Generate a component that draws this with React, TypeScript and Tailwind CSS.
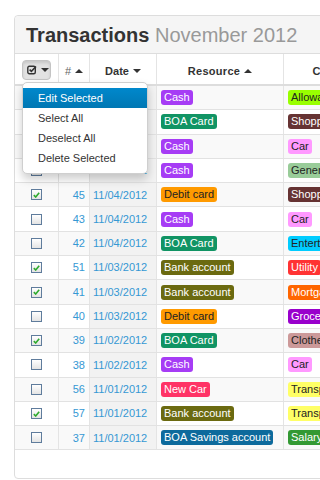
import React from "react";

type Tag = { text: string; bg: string; fg: string };

const RES: Record<string, Tag> = {
  cash: { text: "Cash", bg: "bg-[#a63cf5]", fg: "text-white" },
  boa: { text: "BOA Card", bg: "bg-[#119464]", fg: "text-white" },
  debit: { text: "Debit card", bg: "bg-[#ff9a00]", fg: "text-[#222]" },
  bank: { text: "Bank account", bg: "bg-[#6b6a10]", fg: "text-white" },
  newcar: { text: "New Car", bg: "bg-[#ff3366]", fg: "text-white" },
  savings: { text: "BOA Savings account", bg: "bg-[#0d6a9c]", fg: "text-white" },
};

const CAT: Record<string, Tag> = {
  allowance: { text: "Allowance", bg: "bg-[#99ff00]", fg: "text-[#222]" },
  shopping: { text: "Shopping", bg: "bg-[#663333]", fg: "text-white" },
  car: { text: "Car", bg: "bg-[#ff99ff]", fg: "text-[#222]" },
  general: { text: "General", bg: "bg-[#99cc99]", fg: "text-[#222]" },
  ent: { text: "Entertainment", bg: "bg-[#00ccff]", fg: "text-[#222]" },
  utility: { text: "Utility", bg: "bg-[#ff3333]", fg: "text-white" },
  mortgage: { text: "Mortgage", bg: "bg-[#ff6600]", fg: "text-white" },
  groceries: { text: "Groceries", bg: "bg-[#9900cc]", fg: "text-white" },
  clothes: { text: "Clothes", bg: "bg-[#cc9999]", fg: "text-[#222]" },
  transport: { text: "Transport", bg: "bg-[#ffff66]", fg: "text-[#222]" },
  salary: { text: "Salary", bg: "bg-[#339933]", fg: "text-white" },
};

const rows = [
  { id: 52, date: "11/05/2012", res: "cash", cat: "allowance", checked: false },
  { id: 49, date: "11/05/2012", res: "boa", cat: "shopping", checked: false },
  { id: 48, date: "11/05/2012", res: "cash", cat: "car", checked: false },
  { id: 44, date: "11/05/2012", res: "cash", cat: "general", checked: false },
  { id: 45, date: "11/04/2012", res: "debit", cat: "shopping", checked: true },
  { id: 43, date: "11/04/2012", res: "cash", cat: "car", checked: false },
  { id: 42, date: "11/04/2012", res: "boa", cat: "ent", checked: false },
  { id: 51, date: "11/03/2012", res: "bank", cat: "utility", checked: true },
  { id: 41, date: "11/03/2012", res: "bank", cat: "mortgage", checked: true },
  { id: 40, date: "11/03/2012", res: "debit", cat: "groceries", checked: false },
  { id: 39, date: "11/02/2012", res: "boa", cat: "clothes", checked: true },
  { id: 38, date: "11/02/2012", res: "cash", cat: "car", checked: false },
  { id: 56, date: "11/01/2012", res: "newcar", cat: "transport", checked: false },
  { id: 57, date: "11/01/2012", res: "bank", cat: "transport", checked: true },
  { id: 37, date: "11/01/2012", res: "savings", cat: "salary", checked: false },
];

const CaretUp = () => (
  <span className="inline-block w-0 h-0 ml-[4px] align-middle border-l-[4px] border-r-[4px] border-b-[4px] border-l-transparent border-r-transparent border-b-[#333]" />
);

const CaretDown = () => (
  <span className="inline-block w-0 h-0 ml-[4px] align-middle border-l-[4px] border-r-[4px] border-t-[4px] border-l-transparent border-r-transparent border-t-[#333]" />
);

const Label = ({ tag }: { tag: Tag }) => (
  <span className={`inline-block whitespace-nowrap rounded-[3px] px-[3px] leading-[15px] text-[11px] ${tag.bg} ${tag.fg}`}>
    {tag.text}
  </span>
);

const Checkbox = ({ checked }: { checked: boolean }) => (
  <span className="flex items-center justify-center w-[11px] h-[11px] border border-[#5f7c9c] bg-gradient-to-b from-white to-[#e4e4e4]">
    {checked && (
      <svg width="7" height="6" viewBox="0 0 7 6">
        <path d="M0.8 3.2 L2.7 5 L6.2 0.8" fill="none" stroke="#2eaa2e" strokeWidth="1.6" />
      </svg>
    )}
  </span>
);

const App = () => {
  return (
    <div className="relative w-[320px] h-[480px] overflow-hidden bg-white pl-[14px] pt-[15px] font-['Liberation_Sans',Arial,sans-serif]">
      <div className="w-[520px] h-[464px] border border-[#dddddd] rounded-[4px] bg-white">
        <div className="h-[38px] border-b border-[#dddddd] bg-[#f5f5f5] rounded-t-[4px] pl-[11px] pt-[7px] text-[20px] leading-[24px] whitespace-nowrap">
          <span className="font-bold text-[#333]">Transactions</span>{" "}
          <span className="text-[#999]">November 2012</span>
        </div>

        <div className="flex h-[32px] border-b-2 border-[#dddddd] text-[11px] font-bold text-[#333]">
          <div className="w-[44px] border-r border-[#e4e4e4] pl-[7px] pt-[6px]">
            <div className="flex items-center w-[29px] h-[20px] rounded-[4px] border border-[#c4c4c4] bg-[#e2e2e2] shadow-[inset_0_2px_3px_rgba(0,0,0,0.12)] pl-[4px]">
              <svg width="10" height="10" viewBox="0 0 10 10">
                <rect x="0.8" y="1.3" width="7.5" height="7.5" rx="1.5" fill="none" stroke="#333" strokeWidth="1.4" />
                <path d="M2.6 4.6 L4.4 6.3 L9 1.5" fill="none" stroke="#333" strokeWidth="1.6" />
              </svg>
              <CaretDown />
            </div>
          </div>
          <div className="w-[31px] border-r border-[#e4e4e4] flex items-center justify-center pt-[4px] font-normal text-[#666]">
            #<CaretUp />
          </div>
          <div className="w-[67px] border-r border-[#e4e4e4] flex items-center justify-center pt-[4px]">
            Date<CaretDown />
          </div>
          <div className="w-[127px] border-r border-[#e4e4e4] flex items-center justify-center pt-[4px] tracking-[0.3px]">
            Resource<CaretUp />
          </div>
          <div className="w-[120px] border-r border-[#e4e4e4] flex items-center justify-center pt-[4px] tracking-[0.3px]">
            Category<CaretUp />
          </div>
          <div className="flex-1 flex items-center justify-center pt-[4px]">Amount</div>
        </div>

        {rows.map((r, i) => (
          <div
            key={r.id}
            className={`flex h-[24.3px] border-b border-[#e2e2e2] text-[11px] ${i % 2 === 0 ? "bg-[#f9f9f9]" : "bg-white"}`}
          >
            <div className="w-[44px] border-r border-[#e4e4e4] flex items-center justify-center">
              <Checkbox checked={r.checked} />
            </div>
            <div className="w-[31px] border-r border-[#e4e4e4] flex items-center justify-end pr-[4px] text-[#3598d4]">
              {r.id}
            </div>
            <div className="w-[67px] border-r border-[#e4e4e4] flex items-center pl-[3px] text-[#3598d4] bg-[#f2f2f2]">
              {r.date}
            </div>
            <div className="w-[127px] border-r border-[#e4e4e4] flex items-center pl-[4px]">
              <Label tag={RES[r.res]} />
            </div>
            <div className="w-[120px] border-r border-[#e4e4e4] flex items-center pl-[4px]">
              <Label tag={CAT[r.cat]} />
            </div>
            <div className="flex-1" />
          </div>
        ))}
      </div>

      <div className="absolute left-[22px] top-[82px] w-[126px] py-[5px] bg-white border border-[#cfcfcf] rounded-[5px] shadow-[0_5px_10px_rgba(0,0,0,0.2)] text-[11px] text-[#333]">
        <div className="h-[20px] leading-[20px] pl-[15px] text-white bg-gradient-to-b from-[#0088cc] to-[#0077b3]">Edit Selected</div>
        <div className="h-[20px] leading-[20px] pl-[15px]">Select All</div>
        <div className="h-[20px] leading-[20px] pl-[15px]">Deselect All</div>
        <div className="h-[20px] leading-[20px] pl-[15px]">Delete Selected</div>
      </div>
    </div>
  );
};

export default App;
